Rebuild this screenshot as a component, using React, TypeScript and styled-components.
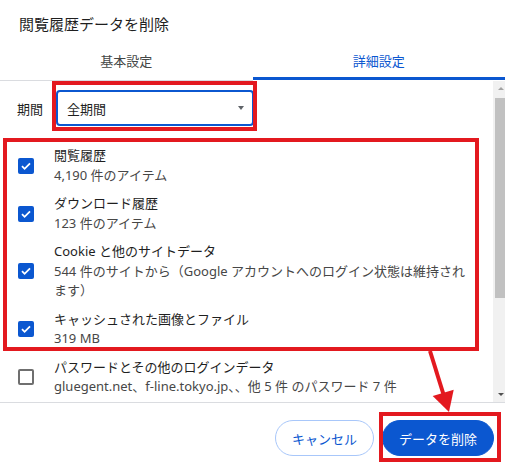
import React from "react";
import styled, { createGlobalStyle } from "styled-components";

const GlobalStyle = createGlobalStyle`
  html, body { margin: 0; padding: 0; background: #ffffff; }
  body {
    font-family: "Noto Sans", "Noto Sans CJK JP", sans-serif;
    color: #1f1f1f;
  }
`;

const Page = styled.div`
  position: relative;
  width: 505px;
  height: 469px;
  overflow: hidden;
  display: flex;
  flex-direction: column;
  background: #fff;
`;

const Title = styled.h1`
  margin: 0;
  box-sizing: border-box;
  height: 40px;
  padding: 14px 0 0 19px;
  font-size: 15px;
  line-height: 20px;
  font-weight: 400;
  color: #1f1f1f;
`;

const TabBar = styled.div`
  display: flex;
  height: 41px;
`;

const Tab = styled.div<{ $active?: boolean }>`
  flex: 1;
  box-sizing: border-box;
  display: flex;
  align-items: center;
  justify-content: center;
  font-size: 13px;
  color: ${(p) => (p.$active ? "#0b57d0" : "#444746")};
  border-bottom: 1px solid ${(p) => (p.$active ? "transparent" : "#dadce0")};
  box-shadow: ${(p) => (p.$active ? "inset 0 -3px 0 #0b57d0" : "none")};
`;

const Body = styled.div`
  flex: 1;
  min-height: 0;
  display: flex;
`;

const Content = styled.div`
  flex: 1;
  min-width: 0;
  overflow: hidden;
  box-sizing: border-box;
  padding: 9px 20px 0 0;
`;

const PeriodRow = styled.div`
  display: flex;
  align-items: center;
  gap: 13px;
  padding-left: 17px;
`;

const Label = styled.span`
  font-size: 13px;
  color: #1f1f1f;
`;

const Select = styled.div`
  box-sizing: border-box;
  width: 198px;
  height: 36px;
  border: 2px solid #0b57d0;
  border-radius: 4px;
  display: flex;
  align-items: center;
  justify-content: space-between;
  padding: 0 8px 0 9px;
  font-size: 13px;
  color: #1f1f1f;
`;

const Caret = styled.span`
  width: 0;
  height: 0;
  border-left: 3.5px solid transparent;
  border-right: 3.5px solid transparent;
  border-top: 4px solid #5f6368;
`;

const ItemList = styled.div`
  margin-top: 20px;
  display: flex;
  flex-direction: column;
  gap: 9px;
`;

const Item = styled.div`
  display: flex;
  align-items: center;
  gap: 20px;
  padding-left: 18px;
`;

const Box = styled.span<{ $checked?: boolean }>`
  flex: none;
  box-sizing: border-box;
  width: 16px;
  height: 16px;
  border-radius: 2px;
  background: ${(p) => (p.$checked ? "#0b57d0" : "#fff")};
  border: ${(p) => (p.$checked ? "none" : "2px solid #6f6f6f")};
  display: flex;
  align-items: center;
  justify-content: center;
`;

const ItemText = styled.div`
  font-size: 13px;
  line-height: 19.5px;
`;

const Primary = styled.div`
  color: #1f1f1f;
`;

const Secondary = styled.div`
  color: #474747;
`;

const Scrollbar = styled.div`
  width: 12px;
  background: #f1f1f1;
  display: flex;
  flex-direction: column;
`;

const ScrollBtn = styled.div`
  height: 15px;
  display: flex;
  align-items: center;
  padding-left: 5px;
`;

const UpArrow = styled.span`
  width: 0;
  height: 0;
  border-left: 3px solid transparent;
  border-right: 3px solid transparent;
  border-bottom: 3px solid #a3a3a3;
`;

const DownArrow = styled.span`
  width: 0;
  height: 0;
  border-left: 3px solid transparent;
  border-right: 3px solid transparent;
  border-top: 3px solid #505050;
`;

const Track = styled.div`
  flex: 1;
  padding-left: 2px;
`;

const Thumb = styled.div`
  margin-top: 2px;
  height: 200px;
  background: #c1c1c1;
`;

const Footer = styled.div`
  box-sizing: border-box;
  height: 67px;
  border-top: 1px solid #dadce0;
  display: flex;
  justify-content: flex-end;
  align-items: flex-start;
  gap: 8px;
  padding: 17px 11px 0 0;
`;

const Button = styled.button<{ $primary?: boolean }>`
  box-sizing: border-box;
  height: 36px;
  padding: 0 16px;
  border-radius: 18px;
  font-family: inherit;
  font-size: 13px;
  cursor: pointer;
  border: 1px solid ${(p) => (p.$primary ? "#0b57d0" : "#a8c7fa")};
  background: ${(p) => (p.$primary ? "#0b57d0" : "#ffffff")};
  color: ${(p) => (p.$primary ? "#ffffff" : "#0b57d0")};
`;

const Overlay = styled.svg`
  position: absolute;
  left: 0;
  top: 0;
  pointer-events: none;
`;

const Check = () => (
  <svg width="16" height="16" viewBox="0 0 16 16">
    <path d="M4 8.2 L6.6 10.8 L12 5.4" fill="none" stroke="#fff" strokeWidth="1.8" />
  </svg>
);

type Entry = { title: string; sub: string; checked: boolean };

const entries: Entry[] = [
  { title: "閲覧履歴", sub: "4,190 件のアイテム", checked: true },
  { title: "ダウンロード履歴", sub: "123 件のアイテム", checked: true },
  {
    title: "Cookie と他のサイトデータ",
    sub: "544 件のサイトから（Google アカウントへのログイン状態は維持されます）",
    checked: true,
  },
  { title: "キャッシュされた画像とファイル", sub: "319 MB", checked: true },
  {
    title: "パスワードとその他のログインデータ",
    sub: "gluegent.net、f-line.tokyo.jp、、他 5 件 のパスワード 7 件",
    checked: false,
  },
];

const RED = "#e3191f";

export default function App() {
  return (
    <Page>
      <GlobalStyle />
      <Title>閲覧履歴データを削除</Title>
      <TabBar>
        <Tab>基本設定</Tab>
        <Tab $active>詳細設定</Tab>
      </TabBar>
      <Body>
        <Content>
          <PeriodRow>
            <Label>期間</Label>
            <Select>
              <span>全期間</span>
              <Caret />
            </Select>
          </PeriodRow>
          <ItemList>
            {entries.map((e) => (
              <Item key={e.title}>
                <Box $checked={e.checked}>{e.checked && <Check />}</Box>
                <ItemText>
                  <Primary>{e.title}</Primary>
                  <Secondary>{e.sub}</Secondary>
                </ItemText>
              </Item>
            ))}
          </ItemList>
        </Content>
        <Scrollbar>
          <ScrollBtn>
            <UpArrow />
          </ScrollBtn>
          <Track>
            <Thumb />
          </Track>
          <ScrollBtn>
            <DownArrow />
          </ScrollBtn>
        </Scrollbar>
      </Body>
      <Footer>
        <Button>キャンセル</Button>
        <Button $primary>データを削除</Button>
      </Footer>
      <Overlay width="505" height="469" viewBox="0 0 505 469">
        <rect x="54" y="83" width="201" height="46" fill="none" stroke={RED} strokeWidth="4" />
        <rect x="5" y="140" width="472" height="209" fill="none" stroke={RED} strokeWidth="4" />
        <rect x="381" y="414" width="118" height="46" fill="none" stroke={RED} strokeWidth="4" />
        <line x1="430" y1="351" x2="444" y2="396" stroke={RED} strokeWidth="4" />
        <polygon points="432.7,396.1 453.7,389.7 449,412" fill={RED} />
      </Overlay>
    </Page>
  );
}
